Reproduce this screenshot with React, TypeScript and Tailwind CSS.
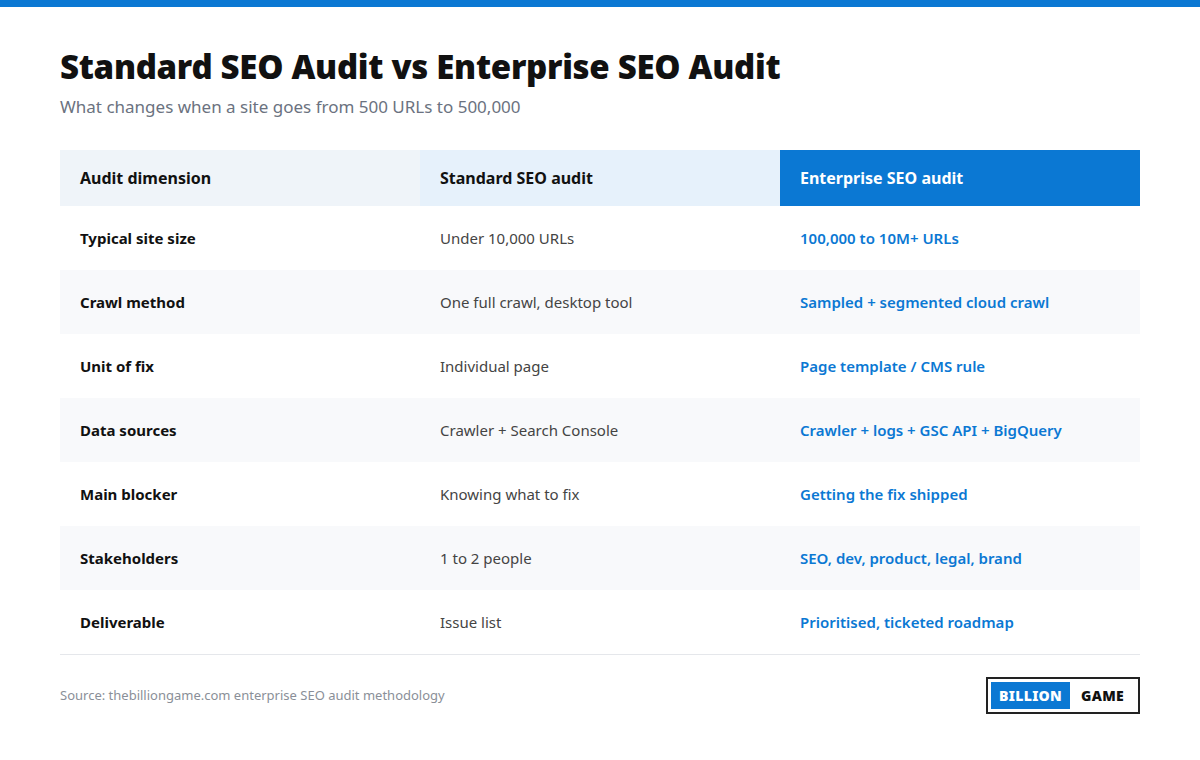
import React from "react";

const rows = [
  ["Typical site size", "Under 10,000 URLs", "100,000 to 10M+ URLs"],
  ["Crawl method", "One full crawl, desktop tool", "Sampled + segmented cloud crawl"],
  ["Unit of fix", "Individual page", "Page template / CMS rule"],
  ["Data sources", "Crawler + Search Console", "Crawler + logs + GSC API + BigQuery"],
  ["Main blocker", "Knowing what to fix", "Getting the fix shipped"],
  ["Stakeholders", "1 to 2 people", "SEO, dev, product, legal, brand"],
  ["Deliverable", "Issue list", "Prioritised, ticketed roadmap"],
];

export default function App() {
  return (
    <div className="w-[1200px] h-[760px] bg-white" style={{ fontFamily: '"Noto Sans", "Open Sans", sans-serif' }}>
      <div className="h-[7px] bg-[#0b78d3]" />
      <div className="px-[60px] pt-[38px]">
        <h1 className="text-[33px] leading-[44px] font-black text-[#111] tracking-[-0.3px]">Standard SEO Audit vs Enterprise SEO Audit</h1>
        <p className="mt-[6px] text-[17px] leading-[24px] text-[#6b7280]">What changes when a site goes from 500 URLs to 500,000</p>
        <div className="mt-[31px] border-b border-[#e5e7eb]">
          <div className="grid grid-cols-3 h-[56px] text-[16px] font-bold">
            <div className="bg-[#eff4f9] px-5 flex items-center text-[#111]">Audit dimension</div>
            <div className="bg-[#e6f1fb] px-5 flex items-center text-[#111]">Standard SEO audit</div>
            <div className="bg-[#0b78d3] px-5 flex items-center text-white">Enterprise SEO audit</div>
          </div>
          {rows.map((r, i) => (
            <div key={i} className={`grid grid-cols-3 h-[64px] text-[15px] ${i % 2 === 1 ? "bg-[#f8f9fb]" : "bg-white"}`}>
              <div className="px-5 flex items-center font-bold text-[#111]">{r[0]}</div>
              <div className="px-5 flex items-center text-[#444]">{r[1]}</div>
              <div className="px-5 flex items-center font-semibold text-[#0b78d3]">{r[2]}</div>
            </div>
          ))}
        </div>
        <div className="mt-[22px] flex items-center justify-between">
          <span className="text-[13px] text-[#8a8f98]">Source: thebilliongame.com enterprise SEO audit methodology</span>
          <div className="flex items-center border-2 border-[#222] p-[3px] h-[37px] mr-0">
            <div className="bg-[#0b78d3] text-white font-black text-[14px] h-full px-[8px] flex items-center tracking-[0.3px]">BILLION</div>
            <div className="text-[#111] font-black text-[14px] px-[11px] flex items-center tracking-[0.3px]">GAME</div>
          </div>
        </div>
      </div>
    </div>
  );
}
